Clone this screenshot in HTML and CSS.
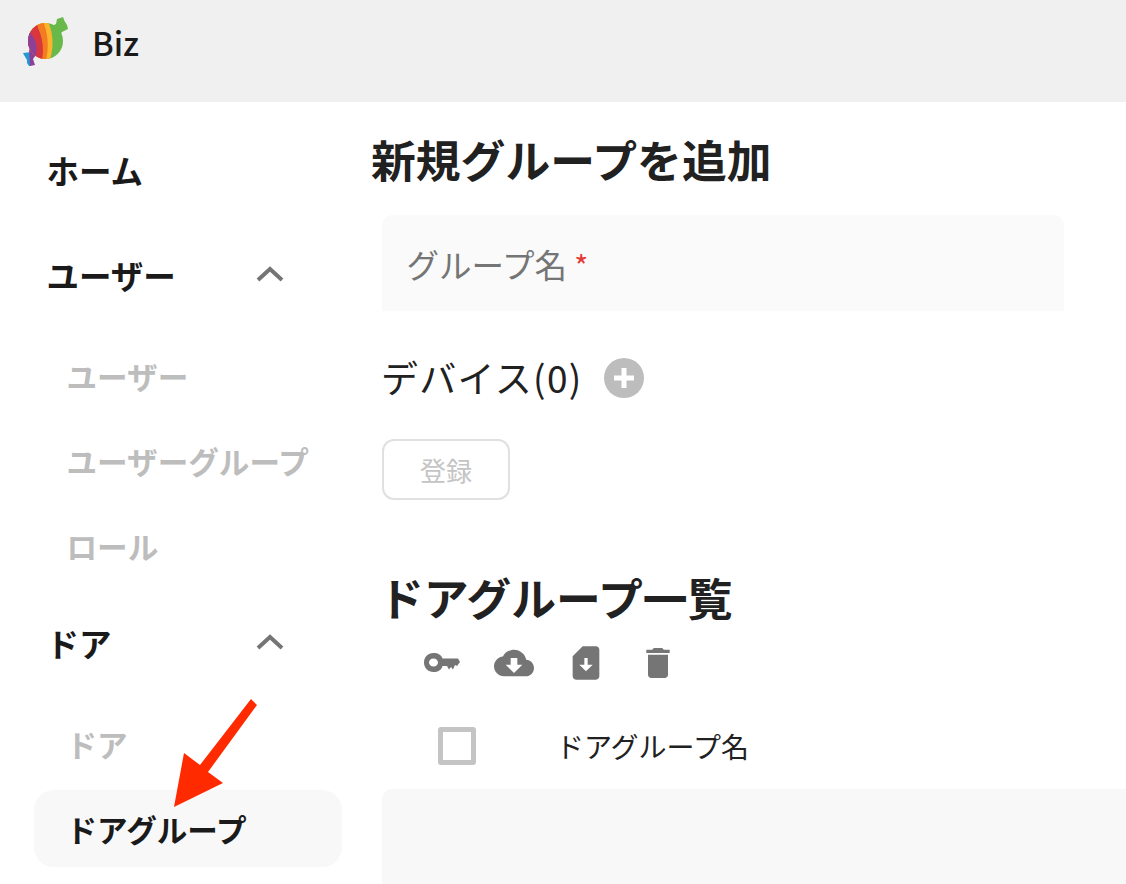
FILE: index.html
```html
<!DOCTYPE html>
<html lang="ja">
<head>
<meta charset="UTF-8">
<title>Biz</title>
<link rel="stylesheet" href="styles.css">
</head>
<body>

<header class="topbar">
  <svg class="logo" width="48" height="52" viewBox="0 0 48 52">
    <defs>
      <clipPath id="candyBody">
        <ellipse cx="23.500" cy="25" rx="17.500" ry="18"/>
      </clipPath>
    </defs>
    <path d="M35 3 L41 1 L42.500 5 L45 9 L46 13 L40 16 L37 20 L30 10 L34 8 Z" fill="#68b949"/>
    <path d="M1 37 L10 36 L9 50 L7 50 L5 47 L5 44 L2 39 Z" fill="#1f9ad6"/>
    <path d="M7 33 L14 39 L11 43 L13 49 L8 50 Z" fill="#8e3f98"/>
    <g clip-path="url(#candyBody)">
      <rect x="0" y="0" width="48" height="52" fill="#68b949"/>
      <path d="M0 0 H26 L27 8 C31 18 32 30 28 44 H0 Z" fill="#fbb42c"/>
      <path d="M0 0 H22 V8 C26 18 27 32 24 44 H0 Z" fill="#f47c20"/>
      <path d="M0 0 H14 L16 12 C21 22 22 34 20 44 H0 Z" fill="#d9373f"/>
      <path d="M0 16 H8 L10 19 C15 26 16 32 13 44 H0 Z" fill="#8e3f98"/>
    </g>
  </svg>
  <span class="brand">Biz</span>
</header>

<div class="page">
  <nav class="sidebar">
    <a class="nav-top home">ホーム</a>
    <section class="nav-group">
      <a class="nav-top">
        <span>ユーザー</span>
        <svg class="chevron" width="28" height="16" viewBox="0 0 28 16"><path d="M2 14 L14 3 L26 14"/></svg>
      </a>
      <a class="nav-sub">ユーザー</a>
      <a class="nav-sub">ユーザーグループ</a>
      <a class="nav-sub">ロール</a>
    </section>
    <section class="nav-group">
      <a class="nav-top">
        <span>ドア</span>
        <svg class="chevron" width="28" height="16" viewBox="0 0 28 16"><path d="M2 14 L14 3 L26 14"/></svg>
      </a>
      <a class="nav-sub">ドア</a>
      <a class="nav-sub current">ドアグループ</a>
    </section>
  </nav>

  <main class="content">
    <h1 class="title-new">新規グループを追加</h1>
    <div class="field">グループ名 <span class="req">*</span></div>

    <div class="devices">
      <span class="devices-label">デバイス(0)</span>
      <svg class="add" width="40" height="40" viewBox="0 0 40 40">
        <circle cx="20" cy="20" r="20" fill="#bdbdbd"/>
        <path d="M20 10 V30 M10 20 H30" stroke="#fff" stroke-width="5"/>
      </svg>
    </div>

    <button class="submit" disabled>登録</button>

    <h2 class="title-list">ドアグループ一覧</h2>

    <div class="toolbar">
      <svg width="40" height="40" viewBox="0 0 40 40">
        <path fill-rule="evenodd" d="M11.500 10 C16 10 19.500 12 20.500 15.500 H36 L38 19 L35 23 L33 22 L31 26.500 L29 24 L27 26.500 L25 23 H20.500 C19.500 27 16 29 11.500 29 C6 29 2 25 2 19.500 C2 14 6 10 11.500 10 Z M11.500 15.500 C8.800 15.500 7 17.300 7 19.500 C7 21.700 8.800 23.500 11.500 23.500 C14.200 23.500 16 21.700 16 19.500 C16 17.300 14.200 15.500 11.500 15.500 Z"/>
      </svg>
      <svg width="40" height="40" viewBox="0 0 24 24"><path d="M19.35 10.04C18.67 6.59 15.64 4 12 4 9.11 4 6.6 5.64 5.35 8.04 2.34 8.36 0 10.91 0 14c0 3.31 2.69 6 6 6h13c2.76 0 5-2.24 5-5 0-2.64-2.05-4.78-4.65-4.96zM17 13l-5 5-5-5h3V9h4v4h3z"/></svg>
      <svg width="40" height="40" viewBox="0 0 24 24"><path d="M18 2h-8L4 8v12c0 1.100.9 2 2 2h12c1.100 0 2-.9 2-2V4c0-1.100-.9-2-2-2zm-6 15-4-4h3V9.020L13 9v4h3l-4 4z"/></svg>
      <svg width="40" height="40" viewBox="0 0 24 24"><path d="M6 19c0 1.100.9 2 2 2h8c1.100 0 2-.9 2-2V7H6v12zM19 4h-3.500l-1-1h-5l-1 1H5v2h14V4z"/></svg>
    </div>

    <div class="table-head">
      <span class="checkbox"></span>
      <span class="col-name">ドアグループ名</span>
    </div>
    <div class="table-body"></div>
  </main>
</div>

<svg class="arrow" width="100" height="120" viewBox="0 0 100 120">
  <polygon points="81,0 87,6 38,73 53,84 4,108 14,54 30,66" fill="#ff2a00"/>
</svg>

</body>
</html>
```

FILE: styles.css
```css
html, body {
  height: 884px;
  overflow: hidden;
}
body {
  margin: 0;
  position: relative;
  background: #fff;
  color: #212121;
  font-family: "Noto Sans CJK JP", "Noto Sans", sans-serif;
}
.topbar {
  height: 102px;
  background: #f0f0f0;
  display: flex;
  align-items: flex-start;
  padding: 16px 0 0 22px;
  box-sizing: border-box;
}
.brand {
  margin-left: 22px;
  margin-top: 2px;
  line-height: 48px;
  font-size: 32.500px;
  font-weight: 500;
  color: #1a1a1a;
}
.page {
  display: flex;
}
.sidebar {
  width: 308px;
  margin-left: 34px;
  padding-top: 30px;
  flex: none;
}
.nav-group {
  margin-bottom: 21px;
}
.nav-top {
  display: flex;
  align-items: center;
  justify-content: space-between;
  height: 76px;
  box-sizing: border-box;
  margin-bottom: 24px;
  padding: 0 58px 2px 12.500px;
  font-size: 32.500px;
  font-weight: 700;
  color: #1a1a1a;
}
.nav-top.home {
  margin-bottom: 29px;
}
.nav-sub {
  display: flex;
  align-items: center;
  height: 77px;
  margin-bottom: 8px;
  padding-left: 32.500px;
  font-size: 30.600px;
  font-weight: 700;
  color: #bdbdbd;
  border-radius: 20px;
}
.nav-sub.current {
  background: #f8f8f8;
  color: #1a1a1a;
}
.chevron {
  margin-top: -1px;
  fill: none;
  stroke: #757575;
  stroke-width: 4;
}
.content {
  flex: 1;
  padding-left: 40px;
  min-width: 0;
}
.title-new {
  margin: 27px 0 0 -11px;
  height: 86px;
  line-height: 60px;
  font-size: 44.800px;
  font-weight: 700;
}
.field {
  width: 682px;
  height: 96px;
  box-sizing: border-box;
  padding-left: 24.500px;
  line-height: 98px;
  background: #fafafa;
  border-radius: 10px 10px 0 0;
  font-size: 32.500px;
  color: #757575;
}
.req {
  color: #e53935;
  font-size: 30px;
}
.devices {
  display: flex;
  align-items: center;
  gap: 21px;
  height: 40px;
  margin-top: 47px;
  font-size: 37px;
  color: #212121;
}
.devices-label {
  letter-spacing: 1.300px;
  margin-top: -2px;
  margin-left: -1px;
}
.submit {
  display: block;
  width: 128px;
  height: 61px;
  margin-top: 41px;
  padding: 0;
  background: #fff;
  border: 2px solid #e0e0e0;
  border-radius: 12px;
  font-family: inherit;
  font-size: 26px;
  color: #c4c4c4;
}
.title-list {
  margin: 67px 0 0 -3px;
  height: 76px;
  line-height: 60px;
  font-size: 44.800px;
  font-weight: 700;
}
.toolbar {
  display: flex;
  gap: 32px;
  padding-left: 40px;
}
.toolbar svg {
  fill: #757575;
}
.table-head {
  display: flex;
  align-items: center;
  height: 38px;
  margin-top: 44px;
  padding-left: 56px;
}
.checkbox {
  width: 38px;
  height: 38px;
  box-sizing: border-box;
  border: 5px solid #c4c4c4;
  border-radius: 3px;
}
.col-name {
  margin-left: 80px;
  font-size: 28px;
}
.table-body {
  height: 120px;
  margin-top: 24px;
  background: #f8f8f8;
  border-radius: 10px 0 0 0;
}
.arrow {
  position: absolute;
  left: 170px;
  top: 699px;
}
```
